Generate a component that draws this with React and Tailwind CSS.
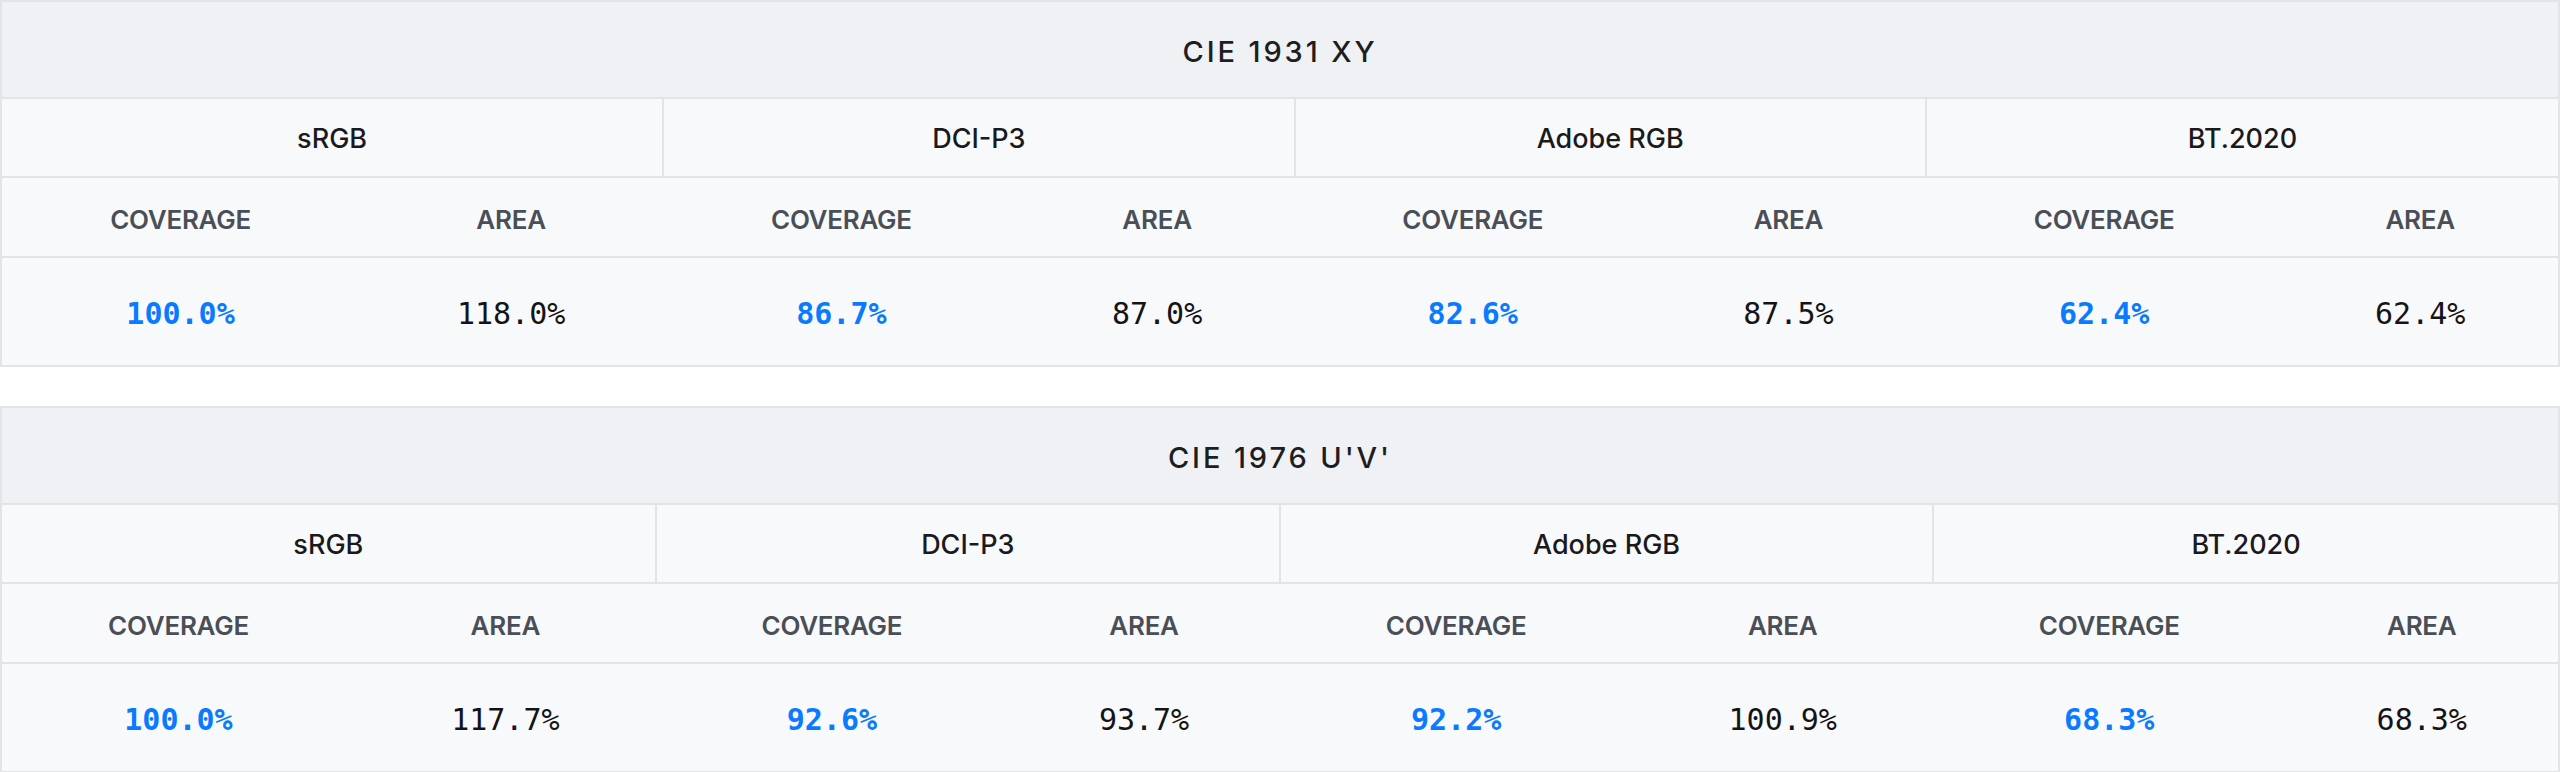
import React from "react";

const tables = [
  {
    title: "CIE 1931 XY",
    rows: [
      { name: "sRGB", coverage: "100.0%", area: "118.0%" },
      { name: "DCI-P3", coverage: "86.7%", area: "87.0%" },
      { name: "Adobe RGB", coverage: "82.6%", area: "87.5%" },
      { name: "BT.2020", coverage: "62.4%", area: "62.4%" },
    ],
  },
  {
    title: "CIE 1976 U'V'",
    rows: [
      { name: "sRGB", coverage: "100.0%", area: "117.7%" },
      { name: "DCI-P3", coverage: "92.6%", area: "93.7%" },
      { name: "Adobe RGB", coverage: "92.2%", area: "100.9%" },
      { name: "BT.2020", coverage: "68.3%", area: "68.3%" },
    ],
  },
];

function GamutTable({ title, rows }) {
  return (
    <table className="w-full border-collapse border-2 border-[#e2e4e8] font-['Inter',sans-serif]">
      <thead>
        <tr>
          <th
            colSpan={8}
            className="h-[97px] pt-1 bg-[#f0f1f4] text-[29px] font-medium tracking-[0.1em] text-[#1d1e21] text-center"
          >
            {title}
          </th>
        </tr>
        <tr className="border-t-2 border-[#e2e4e8]">
          {rows.map((r) => (
            <th
              key={r.name}
              colSpan={2}
              className="h-[79px] pt-1 bg-[#f8f9fb] border-x-2 border-[#e2e4e8] text-[27px] font-medium text-[#1a1a1c] text-center"
            >
              {r.name}
            </th>
          ))}
        </tr>
        <tr className="border-t-2 border-[#e2e4e8]">
          {rows.map((r) => (
            <React.Fragment key={r.name}>
              <th className="h-[80px] pt-1 px-10 bg-[#f8f9fb] text-[26px] font-semibold tracking-[-0.01em] text-[#4a4f57] text-center">
                COVERAGE
              </th>
              <th className="h-[80px] pt-1 px-10 bg-[#f8f9fb] text-[26px] font-semibold tracking-[-0.01em] text-[#4a4f57] text-center">
                AREA
              </th>
            </React.Fragment>
          ))}
        </tr>
      </thead>
      <tbody>
        <tr className="border-t-2 border-[#e2e4e8]">
          {rows.map((r) => (
            <React.Fragment key={r.name}>
              <td className="h-[109px] pt-1 px-10 bg-[#f8f9fb] font-['DejaVu_Sans_Mono',monospace] text-[30px] font-bold text-[#0a7bff] text-center">
                {r.coverage}
              </td>
              <td className="h-[109px] pt-1 px-10 bg-[#f8f9fb] font-['DejaVu_Sans_Mono',monospace] text-[30px] text-[#141416] text-center">
                {r.area}
              </td>
            </React.Fragment>
          ))}
        </tr>
      </tbody>
    </table>
  );
}

export default function App() {
  return (
    <div className="w-[2560px] bg-white">
      <GamutTable {...tables[0]} />
      <div className="mt-[39px]">
        <GamutTable {...tables[1]} />
      </div>
    </div>
  );
}
